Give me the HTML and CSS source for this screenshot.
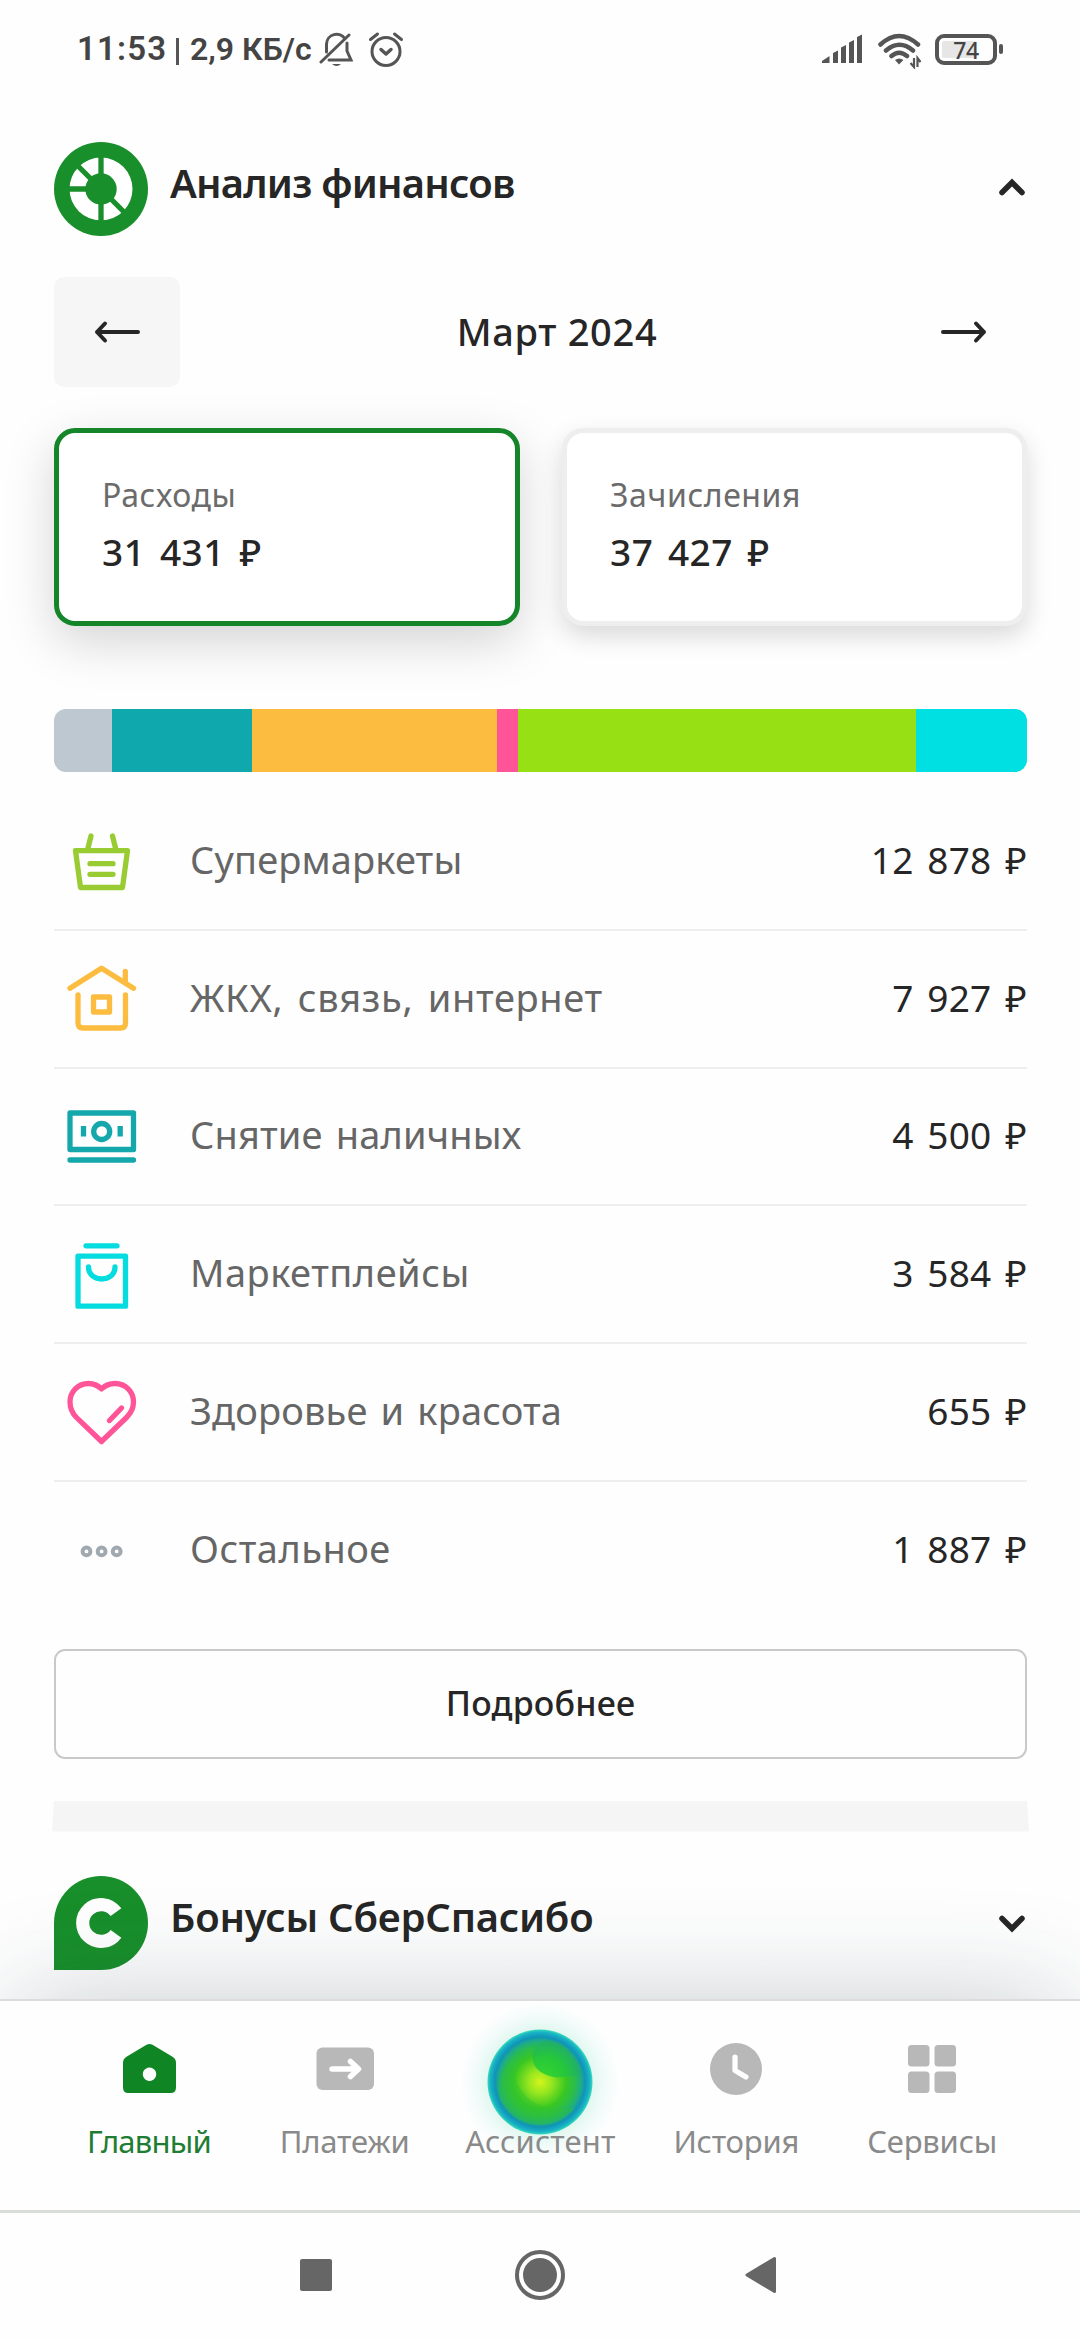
FILE: index.html
```html
<!DOCTYPE html>
<html lang="ru">
<head>
<meta charset="utf-8">
<title>Анализ финансов</title>
<link rel="stylesheet" href="styles.css">
</head>
<body>
<header class="status">
  <span class="clock">11:53</span>
  <span class="divider"></span>
  <span class="speed">2,9 КБ/с</span>
  <svg class="bell" width="34" height="36" viewBox="0 0 34 36" fill="none" stroke="#555" stroke-width="3" stroke-linecap="round">
    <path d="M7.500 21V13a10 10 0 0 1 18.500-5M28 12v8l4 9H10M2 31 30 4"/>
    <path d="M13 33h9q-4.500 4-9 0z" fill="#555" stroke="none"/>
  </svg>
  <svg class="alarm" width="36" height="36" viewBox="0 0 36 36" fill="none" stroke="#555" stroke-width="3" stroke-linecap="round" stroke-linejoin="round">
    <circle cx="18" cy="20.500" r="14"/>
    <path d="m13 18.500 5 4.500 5-4.500" stroke-width="3.500"/>
    <path d="M2.500 8.500 9.500 3M33.500 8.500 26.500 3"/>
  </svg>
  <svg class="signal" width="41" height="30" viewBox="0 0 41 30" fill="#555">
    <path d="M0 29v-2l7.500-5v7zM11 29V19l5-2.500V29zM19 29V13.500l5-2.500V29zM27 29V8.500L32 6v23zM35 29V3l5-2.500V29z"/>
  </svg>
  <svg class="wifi" width="43" height="36" viewBox="0 0 43 36" fill="none" stroke="#555" stroke-width="4.500" stroke-linecap="round">
    <path d="M2.500 11.500Q21 -5.500 40 11.500M8 17.500q13.500-11.500 27 0M13.500 23q7.500-6.500 15.500 0"/>
    <path d="M17 27q4.200-3 8.400 0L21 31.500z" fill="#555" stroke="none"/>
    <path d="M36 25v9l-3.500-4M39.500 34v-9l3 4" stroke-width="2.200" stroke-linecap="butt"/>
  </svg>
  <span class="battery"><span class="charge">74</span></span>
  <span class="nub"></span>
</header>

<main class="content">
  <section class="heading">
    <svg class="logo" width="94" height="94" viewBox="0 0 94 94">
      <circle cx="47" cy="47" r="47" fill="#188f2b"/>
      <circle cx="47" cy="47" r="31.500" fill="#fff"/>
      <path d="M47 14v66M47 47H14M47 47 23 23M47 47l24 24" stroke="#188f2b" stroke-width="5.300"/>
      <circle cx="47" cy="47" r="15.700" fill="#188f2b"/>
    </svg>
    <h2 class="title title-analysis">Анализ финансов</h2>
    <svg class="chevron chevron-up" width="28" height="18" viewBox="0 0 28 18"><path d="m4 14.500 10-10 10 10"/></svg>
  </section>

  <section class="month">
    <button class="arrow arrow-prev"><svg width="48" height="24" viewBox="0 0 48 24"><path d="M45 12H4M12 3.500 4 12l8 8.500"/></svg></button>
    <span class="month-name">Март 2024</span>
    <button class="arrow"><svg width="48" height="24" viewBox="0 0 48 24"><path d="M3 12h41M36 3.500l8 8.500-8 8.500"/></svg></button>
  </section>

  <section class="cards">
    <div class="card card-active"><span class="card-label">Расходы</span><span class="card-sum">31 431 ₽</span></div>
    <div class="card"><span class="card-label">Зачисления</span><span class="card-sum">37 427 ₽</span></div>
  </section>

  <div class="chart">
    <i class="part-other"></i><i class="part-cash"></i><i class="part-home"></i><i class="part-health"></i><i class="part-market"></i><i class="part-shops"></i>
  </div>

  <ul class="list">
    <li class="row">
      <svg class="icon lime" viewBox="0 0 94 94"><path d="M37 22l-3.500 14M58.500 22 62 36M21.500 36.700h52L68.500 73.500h-42zM36 49.700h23M36 60.300h23"/></svg>
      <span class="name">Супермаркеты</span><span class="sum">12 878 ₽</span>
    </li>
    <li class="row">
      <svg class="icon orange" viewBox="0 0 94 94"><path d="M16 36.300 47.500 16.300l32 20M71.300 19.300V30M24 43v28q0 5 5 5h37.500q5 0 5-5V43M39.500 45h16v15h-16z"/></svg>
      <span class="name name-home">ЖКХ, связь, интернет</span><span class="sum">7 927 ₽</span>
    </li>
    <li class="row">
      <svg class="icon teal" viewBox="0 0 94 94"><path d="M16 24h63.500v36.500H16zM16 71h63.500"/><circle cx="47.700" cy="42.500" r="8"/><path d="M29.500 37v10.500M66.200 37v10.500" stroke-linecap="butt"/></svg>
      <span class="name">Снятие наличных</span><span class="sum">4 500 ₽</span>
    </li>
    <li class="row">
      <svg class="icon cyan" viewBox="0 0 94 94"><path d="M32 18.800h31M24 29.200h47.500v50H24zM34.500 40c0 16 26.500 16 26.500 0"/></svg>
      <span class="name name-shops">Маркетплейсы</span><span class="sum">3 584 ₽</span>
    </li>
    <li class="row">
      <svg class="icon pink" viewBox="0 0 94 94"><path d="M47.500 24C43.500 20 39 18.500 34.500 18.500 24 18.500 16 26.500 16 37c0 6 2.500 11.500 6.500 15.500l25 24 25-24c4-4 7-9.500 7-15.500 0-10.500-8-18.500-18.500-18.500-4.500 0-9.500 1.500-13.500 5.500zM55.500 55.500 67.500 43"/></svg>
      <span class="name">Здоровье и красота</span><span class="sum">655 ₽</span>
    </li>
    <li class="row">
      <svg class="icon grey" viewBox="0 0 94 94"><circle cx="32.500" cy="48.400" r="3.900"/><circle cx="47.600" cy="48.400" r="3.900"/><circle cx="62.700" cy="48.400" r="3.900"/></svg>
      <span class="name name-shops">Остальное</span><span class="sum">1 887 ₽</span>
    </li>
  </ul>

  <button class="more">Подробнее</button>
  <div class="strip"></div>

  <section class="heading heading-bonus">
    <svg class="logo" width="94" height="94" viewBox="0 0 94 94">
      <path d="M0 94V47a47 47 0 1 1 47 47z" fill="#188f2b"/>
      <path d="M62 36.200A18.400 18.400 0 1 0 62 57.800" fill="none" stroke="#fff" stroke-width="13.200"/>
    </svg>
    <h2 class="title title-bonus">Бонусы СберСпасибо</h2>
    <svg class="chevron chevron-down" width="28" height="18" viewBox="0 0 28 18"><path d="m4 3.500 10 10 10-10"/></svg>
  </section>
</main>

<nav class="tabs">
  <a class="tab tab-active">
    <svg width="60" height="54" viewBox="0 0 60 54"><path fill="#0f8523" fill-rule="evenodd" d="M27.500 2.800q3-1.600 6 0l20 12q3.500 2.200 3.500 6V45.500q0 5.500-5.500 5.500h-42Q4 51 4 45.500V20.800q0-3.800 3.500-6zM30.500 25.500a6.700 6.700 0 1 0 .01 0z"/></svg>
    <span>Главный</span>
  </a>
  <a class="tab">
    <svg width="60" height="54" viewBox="0 0 60 54"><rect x="1.500" y="5.500" width="57.500" height="42.500" rx="6" fill="#b8b8b8"/><path d="M17 27h26M35.500 19.500 43.500 27l-8 7.500" fill="none" stroke="#fff" stroke-width="5.500" stroke-linecap="round" stroke-linejoin="round"/></svg>
    <span>Платежи</span>
  </a>
  <a class="tab tab-assist">
    <svg class="orb" width="160" height="160" viewBox="0 0 160 160">
      <defs>
        <radialGradient id="glow"><stop offset=".62" stop-color="#40d098" stop-opacity=".17"/><stop offset=".8" stop-color="#50d8b8" stop-opacity=".08"/><stop offset="1" stop-color="#70e0e0" stop-opacity="0"/></radialGradient>
        <radialGradient id="ball"><stop offset="0" stop-color="#d4f51c"/><stop offset=".22" stop-color="#97e61f"/><stop offset=".5" stop-color="#38c722"/><stop offset=".68" stop-color="#2abb50"/><stop offset=".79" stop-color="#1dac88"/><stop offset=".86" stop-color="#1093b8"/><stop offset=".95" stop-color="#18b4c4"/><stop offset="1" stop-color="#38dcb8"/></radialGradient>
        <radialGradient id="sheen" gradientUnits="userSpaceOnUse" cx="86" cy="73" r="40"><stop offset="0" stop-color="#20cf32"/><stop offset=".45" stop-color="#22c83e"/><stop offset="1" stop-color="#22a476"/></radialGradient>
      </defs>
      <circle cx="80" cy="80" r="80" fill="url(#glow)"/>
      <circle cx="80" cy="80" r="52.500" fill="url(#ball)"/>
      <path d="M72.500 55Q73 41 88 38.500 103 40 112 53q8 10 9 21-13 0-24 1.500Q73 72 72.500 55z" fill="url(#sheen)" opacity=".85"/>
      <path d="M53 57q-2 22 14 38 17 16 48 11-14 17-36 17Q54 122 40 98 34 74 53 57z" fill="#2fc431" opacity=".4"/>
    </svg>
    <span>Ассистент</span>
  </a>
  <a class="tab">
    <svg width="60" height="54" viewBox="0 0 60 54"><circle cx="30" cy="27" r="26" fill="#b8b8b8"/><path d="M29 15v13.500L40 35" fill="none" stroke="#fff" stroke-width="5.200" stroke-linecap="round" stroke-linejoin="round"/></svg>
    <span>История</span>
  </a>
  <a class="tab">
    <svg width="60" height="54" viewBox="0 0 60 54" fill="#b8b8b8"><rect x="6" y="3" width="21.500" height="21.500" rx="3.500"/><rect x="32.500" y="3" width="21.500" height="21.500" rx="3.500"/><rect x="6" y="29.500" width="21.500" height="21.500" rx="3.500"/><rect x="32.500" y="29.500" width="21.500" height="21.500" rx="3.500"/></svg>
    <span>Сервисы</span>
  </a>
</nav>

<footer class="system">
  <svg width="52" height="52" viewBox="0 0 52 52" fill="#666"><rect x="10" y="10" width="32" height="32" rx="2"/></svg>
  <svg width="52" height="52" viewBox="0 0 52 52" fill="#666"><circle cx="26" cy="26" r="17"/><circle cx="26" cy="26" r="23" fill="none" stroke="#666" stroke-width="4"/></svg>
  <svg width="52" height="52" viewBox="0 0 52 52" fill="#666" stroke="#666" stroke-width="3" stroke-linejoin="round"><path d="M9 26 36.500 9.500v33z"/></svg>
</footer>
</body>
</html>
```

FILE: styles.css
```css
* { box-sizing: border-box; }
body {
  margin: 0;
  width: 1080px;
  height: 2340px;
  display: flex;
  flex-direction: column;
  overflow: hidden;
  background: #fefefe;
  color: #262626;
  font-family: "Noto Sans", sans-serif;
}
svg { display: block; flex: none; }
button { border: 0; padding: 0; background: none; color: inherit; font: inherit; }

.status {
  height: 98px;
  flex: none;
  display: flex;
  align-items: center;
  padding: 0 77px 0 77px;
  color: #444;
  font-family: Roboto, sans-serif;
  font-weight: 600;
  line-height: 40px;
}
.clock { font-size: 33px; letter-spacing: 1.2px; width: 99px; white-space: nowrap; }
.divider { width: 3px; height: 27px; margin-top: 5px; background: #555; }
.speed { font-size: 32px; margin-left: 11px; width: 127px; white-space: nowrap; }
.bell { margin-left: 2px; }
.alarm { margin-left: 15px; }
.signal { margin-left: auto; }
.wifi { margin: 3px 14px 0 15px; }
.battery {
  width: 62px;
  height: 31px;
  padding: 3px;
  border: 4px solid #555;
  border-radius: 9px;
  display: flex;
  background: linear-gradient(90deg, #e6e6e6 70%, #fefefe 70%) content-box;
}
.charge { flex: 1; text-align: center; font: 500 23px/19px "Noto Sans", sans-serif; letter-spacing: -0.5px; }
.nub { width: 4px; height: 10px; margin-left: 2px; border-radius: 2px; background: #555; }

.content { flex: 1; padding: 44px 53px 0 54px; display: flex; flex-direction: column; }
.heading { height: 94px; flex: none; display: flex; align-items: center; }
.title { flex: 1; margin: 0 0 0 22px; padding-bottom: 12px; font-size: 40px; line-height: 50px; font-weight: 600; white-space: nowrap; }
.title-analysis { letter-spacing: -0.8px; }
.title-bonus { letter-spacing: -0.25px; }
.chevron { fill: none; stroke: #262626; stroke-width: 5.500px; stroke-linecap: round; stroke-linejoin: miter; margin-right: 1px; }
.chevron-up { margin-bottom: 5px; }
.chevron-down { margin-top: 3px; }

.month { margin-top: 41px; height: 110px; flex: none; display: flex; align-items: center; justify-content: space-between; }
.arrow { width: 126px; height: 110px; border-radius: 10px; display: flex; align-items: center; justify-content: center; }
.arrow-prev { background: #f6f6f6; }
.arrow svg { fill: none; stroke: #262626; stroke-width: 4px; stroke-linecap: round; stroke-linejoin: round; }
.month-name { font-size: 38px; font-weight: 500; line-height: 50px; margin-left: 33px; padding-bottom: 3px; letter-spacing: 0.7px; }

.cards { margin-top: 41px; height: 198px; flex: none; display: grid; grid-template-columns: 466px 465px; justify-content: space-between; }
.card {
  border: 5px solid #eee;
  border-radius: 21px;
  padding: 37px 0 0 43px;
  display: flex;
  flex-direction: column;
  background: #fff;
  box-shadow: 0 10px 24px rgba(0, 0, 0, .15);
}
.card-active { border-color: #148528; box-shadow: 0 16px 50px rgba(0, 0, 0, .17); }
.card-label { font-size: 32px; line-height: 50px; color: #6b6b6b; letter-spacing: 0.6px; }
.card-sum { font-size: 37px; line-height: 60px; margin-top: 2px; font-weight: 550; letter-spacing: 0.5px; word-spacing: 4.500px; }

.chart { margin-top: 83px; height: 63px; flex: none; display: flex; border-radius: 12px; overflow: hidden; }
.part-other { width: 58px; background: #bdc8d1; }
.part-cash { width: 140px; background: #0fa8ad; }
.part-home { width: 245px; background: #fcbc40; }
.part-health { width: 20.500px; background: #ff5497; }
.part-market { width: 398.500px; background: #97e013; }
.part-shops { flex: 1; background: #00dfe2; }

.list { margin: 21px 0 0; padding: 0; list-style: none; }
.row { height: 137.750px; display: flex; align-items: center; border-bottom: 2px solid #eee; }
.row:last-child { border-color: transparent; }
.icon { width: 94px; height: 94px; fill: none; stroke: currentColor; stroke-width: 5.300px; stroke-linecap: round; stroke-linejoin: round; }
.lime { color: #9c3; }
.orange { color: #fcbc40; }
.teal { color: #14a8ad; }
.cyan { color: #05dce0; }
.pink { color: #ff5497; }
.grey { color: #a1a9b0; stroke-width: 4px; }
.name { flex: 1; margin-left: 42px; padding-bottom: 4px; font-size: 38px; line-height: 50px; color: #666; letter-spacing: 0.150px; word-spacing: 3px; }
.name-home { letter-spacing: 0.650px; word-spacing: 4px; }
.name-shops { letter-spacing: 0.500px; }
.sum { padding-bottom: 2px; font-size: 37px; line-height: 50px; font-weight: 450; letter-spacing: 0.200px; word-spacing: 4px; }

.more { margin-top: 29px; height: 110px; flex: none; border: 2px solid #c9c9c9; border-radius: 11px; font-size: 34px; font-weight: 500; padding-bottom: 2px; letter-spacing: 0.200px; }
.strip { margin: 42px -2px 0; height: 31px; flex: none; background: #f5f5f5; clip-path: polygon(2px 0, calc(100% - 2px) 0, 100% 100%, 0 100%); }
.heading-bonus { margin-top: 44px; }

.tabs {
  position: relative;
  flex: none;
  height: 211px;
  padding: 0 50px 0 51px;
  display: flex;
  border-top: 2px solid #dcdcdc;
  background: #fefefe;
  box-shadow: 0 -15px 110px -15px rgba(30, 55, 65, .24);
}
.tab { flex: 1; display: flex; flex-direction: column; align-items: center; padding-top: 41px; color: #8a8a8a; font-size: 31px; line-height: 42px; letter-spacing: -0.200px; }
.tab span { margin-top: 24px; position: relative; }
.tab-active { color: #1f7d33; letter-spacing: -0.800px; }
.tab-assist { letter-spacing: 0.150px; }
.orb { margin: -40px 0 -66px; }

.system {
  position: relative;
  flex: none;
  height: 130px;
  display: flex;
  justify-content: center;
  gap: 172px;
  padding-top: 36px;
  border-top: 3px solid #d9ddd9;
  background: #fefefe;
}
```
